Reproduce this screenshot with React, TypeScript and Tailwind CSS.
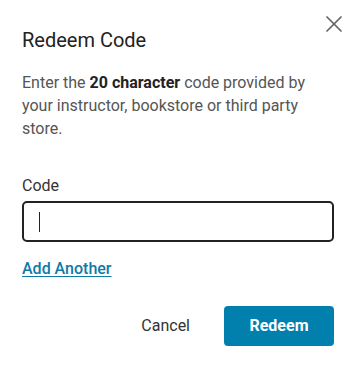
import { X } from 'lucide-react'

export default function App() {
  return (
    <div className="w-[356px] h-[369px] bg-white relative font-['Roboto',sans-serif]">
      <button className="absolute left-[320px] top-[10px] w-[28px] h-[28px] flex items-center justify-center text-[#666]">
        <X size={28} strokeWidth={1.5} />
      </button>
      <div className="pt-[28px] px-[22px]">
        <h2 className="text-[20px] leading-[24px] text-[#222]">Redeem Code</h2>
        <p className="mt-[19px] text-[16px] leading-[23px] text-[#555]">
          Enter the <span className="font-bold text-[#222]">20 character</span> code provided by your instructor, bookstore or third party store.
        </p>
        <label className="block mt-[36px] text-[16px] leading-[20px] text-[#333]">Code</label>
        <div className="mt-[5px] h-[41px] w-[312px] border-2 border-[#222] rounded-[5px] flex items-center px-[15px]">
          <span className="w-px h-[20px] bg-[#222]" />
        </div>
        <a className="block mt-[16px] w-fit text-[16px] leading-[22px] font-medium text-[#0e7ba6] underline underline-offset-2">Add Another</a>
        <div className="mt-[26px] flex justify-end items-center gap-[34px]">
          <button className="text-[16px] text-[#333]">Cancel</button>
          <button className="w-[110px] h-[40px] rounded-[4px] bg-[#0180ae] text-white font-bold text-[16px]">Redeem</button>
        </div>
      </div>
    </div>
  )
}
